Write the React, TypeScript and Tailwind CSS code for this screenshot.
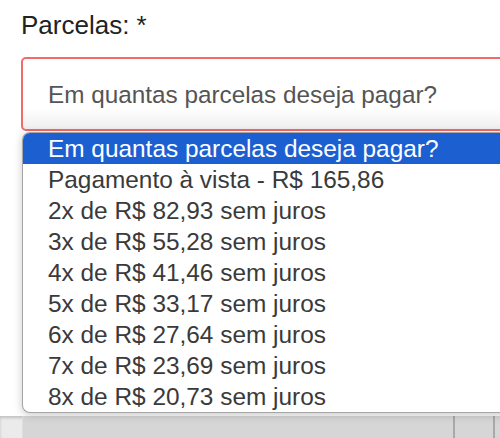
import React from "react";

const options = [
  "Pagamento à vista - R$ 165,86",
  "2x de R$ 82,93 sem juros",
  "3x de R$ 55,28 sem juros",
  "4x de R$ 41,46 sem juros",
  "5x de R$ 33,17 sem juros",
  "6x de R$ 27,64 sem juros",
  "7x de R$ 23,69 sem juros",
  "8x de R$ 20,73 sem juros",
];

export default function App() {
  return (
    <div
      className="relative w-[500px] h-[438px] overflow-hidden bg-white"
      style={{ fontFamily: '"Liberation Sans", Arial, sans-serif' }}
    >
      <div className="flex flex-col pl-[21px] pt-[10px]">
        <label className="text-[26px] leading-[30px] text-[#222]">Parcelas: *</label>
        <div className="mt-[17px] w-[520px] h-[74px] rounded-[5px] border-2 border-[#f26a6a] bg-gradient-to-b from-white from-70% to-[#efefef] flex items-center pl-[25px] pt-[2px]">
          <span className="text-[24.3px] leading-[28px] text-[#555]">Em quantas parcelas deseja pagar?</span>
        </div>
        <div className="mt-[285px] -ml-[21px] h-[22px] flex bg-[#ebebeb] shadow-[inset_0_2px_3px_rgba(0,0,0,0.18)]">
          <div className="ml-[22px] w-[431px] border-l border-[#dedede] bg-[#d6d6d6]" />
          <div className="w-[2px] bg-[#a9a9a9]" />
          <div className="w-[38px] bg-[#d6d6d6]" />
          <div className="w-[2px] bg-[#a9a9a9]" />
          <div className="flex-1 bg-[#d6d6d6]" />
        </div>
      </div>

      <div className="absolute left-[22px] top-[132px] w-[500px] rounded-l-[8px] border border-r-0 border-[#a6a6a6] bg-white overflow-hidden shadow-[0_2px_8px_rgba(0,0,0,0.22)]">
        <div className="h-[31px] pl-[25px] bg-[#1b5fd1] text-white text-[24.4px] leading-[31px] whitespace-nowrap">
          Em quantas parcelas deseja pagar?
        </div>
        {options.map((o) => (
          <div
            key={o}
            className="h-[31px] pl-[25px] text-[#3a3a3a] text-[24.4px] leading-[31px] whitespace-nowrap"
          >
            {o}
          </div>
        ))}
      </div>
    </div>
  );
}
